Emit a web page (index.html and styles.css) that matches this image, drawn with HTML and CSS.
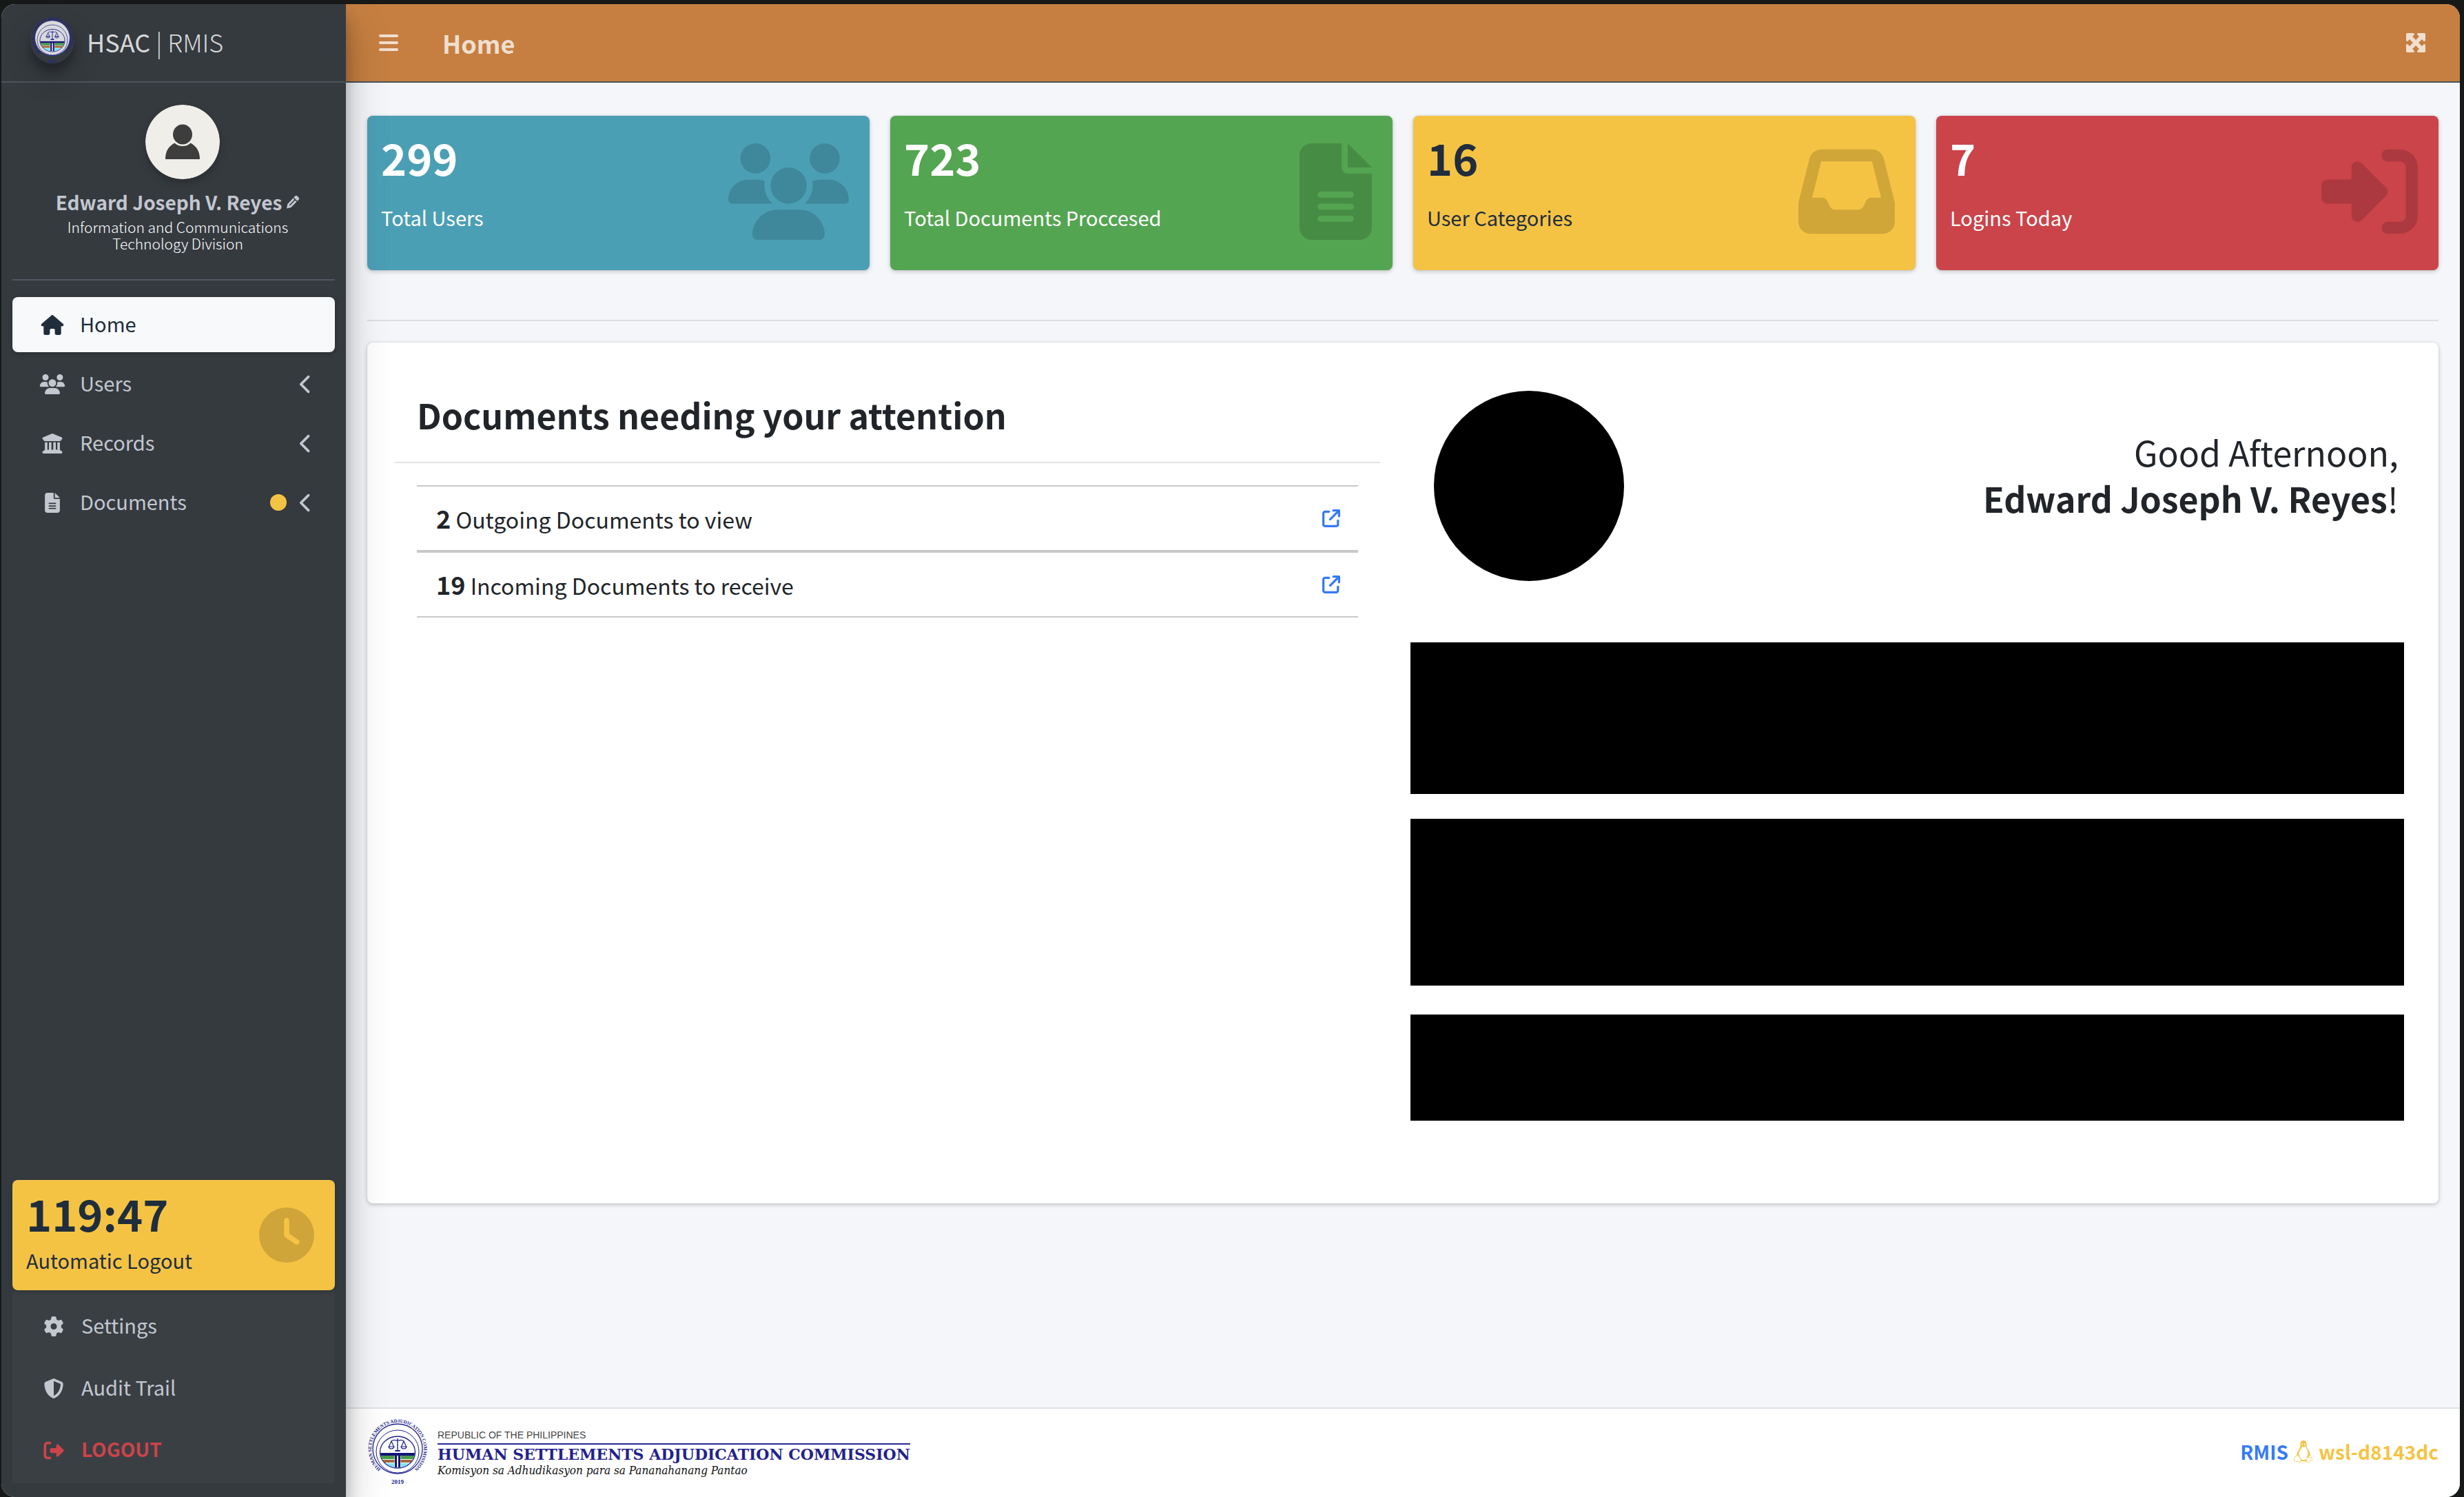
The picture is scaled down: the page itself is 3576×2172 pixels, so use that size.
FILE: index.html
```html
<!DOCTYPE html>
<html lang="en">
<head>
<meta charset="utf-8">
<title>HSAC | RMIS</title>
<link rel="stylesheet" href="styles.css">
</head>
<body>
<svg class="defs" aria-hidden="true">
  <defs>
    <symbol id="i-users" viewBox="0 0 640 512"><path d="M144 0a80 80 0 1 1 0 160A80 80 0 1 1 144 0zM512 0a80 80 0 1 1 0 160A80 80 0 1 1 512 0zM0 298.700C0 239.800 47.800 192 106.700 192h42.700c15.900 0 31 3.500 44.600 9.700c-1.300 7.200-1.900 14.700-1.900 22.300c0 38.200 16.800 72.500 43.300 96c-.2 0-.4 0-.7 0H21.300C9.600 320 0 310.400 0 298.700zM405.300 320c-.2 0-.4 0-.7 0c26.600-23.500 43.300-57.800 43.300-96c0-7.600-.7-15-1.900-22.300c13.600-6.300 28.700-9.700 44.600-9.700h42.700C592.200 192 640 239.800 640 298.700c0 11.800-9.600 21.300-21.300 21.300H405.300zM224 224a96 96 0 1 1 192 0 96 96 0 1 1-192 0zM128 485.300C128 411.700 187.700 352 261.300 352H378.700C452.300 352 512 411.700 512 485.300c0 14.700-11.900 26.700-26.700 26.700H154.700c-14.700 0-26.700-11.900-26.700-26.700z"/></symbol>
    <symbol id="i-file" viewBox="0 0 384 512"><path d="M64 0C28.700 0 0 28.700 0 64V448c0 35.300 28.700 64 64 64H320c35.300 0 64-28.700 64-64V160H256c-17.700 0-32-14.300-32-32V0H64zM256 0V128H384L256 0zM112 256H272c8.800 0 16 7.200 16 16s-7.200 16-16 16H112c-8.800 0-16-7.200-16-16s7.200-16 16-16zm0 64H272c8.800 0 16 7.200 16 16s-7.200 16-16 16H112c-8.800 0-16-7.200-16-16s7.200-16 16-16zm0 64H272c8.800 0 16 7.200 16 16s-7.200 16-16 16H112c-8.800 0-16-7.200-16-16s7.200-16 16-16z"/></symbol>
    <symbol id="i-inbox" viewBox="0 0 512 512"><path d="M121 32C91.600 32 66 52 58.900 80.500L1.900 308.400C.6 313.500 0 318.700 0 323.900V416c0 35.300 28.700 64 64 64H448c35.300 0 64-28.700 64-64V323.900c0-5.200-.6-10.400-1.900-15.500l-57-227.900C446 52 420.400 32 391 32H121zm0 64H391l48 192H387.800c-12.100 0-23.200 6.800-28.600 17.700l-14.300 28.600c-5.400 10.800-16.500 17.700-28.600 17.700H195.800c-12.100 0-23.200-6.800-28.600-17.700l-14.300-28.600c-5.400-10.800-16.500-17.700-28.600-17.700H73L121 96z"/></symbol>
    <symbol id="i-login" viewBox="0 0 512 512"><path d="M352 96l64 0c17.700 0 32 14.300 32 32l0 256c0 17.700-14.300 32-32 32l-64 0c-17.700 0-32 14.300-32 32s14.300 32 32 32l64 0c53 0 96-43 96-96l0-256c0-53-43-96-96-96l-64 0c-17.700 0-32 14.300-32 32s14.300 32 32 32zM342.600 233.400l-128-128C205.500 96.200 191.700 93.500 179.800 98.400S160 115.100 160 128v64H32c-17.700 0-32 14.300-32 32v64c0 17.700 14.300 32 32 32h128v64c0 12.900 7.800 24.600 19.800 29.600s25.700 2.200 34.900-6.900l128-128c12.500-12.500 12.500-32.800 0-45.300z"/></symbol>
    <symbol id="i-logout" viewBox="0 0 512 512"><path d="M160 96c17.700 0 32-14.300 32-32s-14.300-32-32-32H96C43 32 0 75 0 128V384c0 53 43 96 96 96h64c17.700 0 32-14.300 32-32s-14.300-32-32-32H96c-17.700 0-32-14.300-32-32V128c0-17.700 14.300-32 32-32h64zM502.600 233.400l-128-128C365.500 96.200 351.700 93.500 339.800 98.400S320 115.100 320 128v64H192c-17.700 0-32 14.300-32 32v64c0 17.700 14.300 32 32 32h128v64c0 12.900 7.800 24.600 19.800 29.600s25.700 2.200 34.900-6.900l128-128c12.500-12.500 12.500-32.800 0-45.300z"/></symbol>
    <symbol id="i-house" viewBox="0 0 576 512"><path d="M575.800 255.500c0 18-15 32.100-32 32.100h-32l.7 160.200c0 2.700-.2 5.400-.5 8.100V472c0 22.100-17.900 40-40 40H456c-1.100 0-2.200 0-3.300-.1c-1.400 .1-2.800 .1-4.200 .1H416 392c-22.100 0-40-17.900-40-40V448 384c0-17.700-14.300-32-32-32H256c-17.700 0-32 14.300-32 32v64 24c0 22.100-17.900 40-40 40H160 128.100c-1.500 0-3-.1-4.500-.2c-1.200 .1-2.400 .2-3.600 .2H104c-22.100 0-40-17.900-40-40V360c0-.9 0-1.900 .1-2.800V287.600H32c-18 0-32-14-32-32.100c0-9 3-17 10-24L266.400 8c7-7 15-8 22-8s15 2 21 7L564.800 231.500c8 7 12 15 11 24z"/></symbol>
    <symbol id="i-bank" viewBox="0 0 512 512"><path d="M243.400 2.600l-224 96c-14 6-21.800 21-18.700 35.800S16.800 160 32 160v8c0 13.300 10.700 24 24 24H456c13.300 0 24-10.700 24-24v-8c15.200 0 28.300-10.700 31.300-25.600s-4.800-29.900-18.700-35.800l-224-96c-8-3.400-17.200-3.400-25.200 0zM128 224H64V420.300c-.6 .3-1.200 .7-1.800 1.100l-48 32c-11.700 7.800-17 22.400-12.900 35.900S17.900 512 32 512H480c14.100 0 26.500-9.200 30.600-22.700s-1.100-28.100-12.900-35.900l-48-32c-.6-.4-1.200-.7-1.800-1.100V224H384V416H344V224H280V416H232V224H168V416H128V224z"/></symbol>
    <symbol id="i-left" viewBox="0 0 320 512"><path d="M9.400 233.400c-12.500 12.500-12.500 32.800 0 45.300l192 192c12.500 12.500 32.800 12.500 45.300 0s12.500-32.800 0-45.300L77.300 256 246.600 86.600c12.500-12.500 12.500-32.800 0-45.300s-32.800-12.500-45.300 0l-192 192z"/></symbol>
    <symbol id="i-gear" viewBox="0 0 512 512"><path d="M495.900 166.600c3.200 8.700 .5 18.400-6.400 24.600l-43.300 39.400c1.100 8.300 1.700 16.800 1.700 25.400s-.6 17.100-1.700 25.400l43.300 39.400c6.900 6.200 9.600 15.900 6.400 24.600c-4.400 11.900-9.700 23.300-15.800 34.300l-4.700 8.100c-6.600 11-14 21.400-22.100 31.200c-5.900 7.200-15.700 9.600-24.500 6.800l-55.700-17.700c-13.400 10.300-28.200 18.900-44 25.400l-12.500 57.100c-2 9.100-9 16.300-18.200 17.800c-13.800 2.300-28 3.500-42.500 3.500s-28.700-1.200-42.500-3.500c-9.200-1.500-16.200-8.700-18.200-17.800l-12.500-57.100c-15.800-6.500-30.600-15.100-44-25.400L83.100 425.900c-8.800 2.800-18.600 .3-24.500-6.800c-8.100-9.800-15.500-20.200-22.100-31.200l-4.700-8.100c-6.100-11-11.400-22.400-15.800-34.300c-3.200-8.700-.5-18.400 6.400-24.600l43.300-39.400C64.600 273.100 64 264.600 64 256s.6-17.100 1.700-25.400L22.400 191.200c-6.900-6.200-9.600-15.900-6.400-24.600c4.400-11.900 9.700-23.300 15.800-34.300l4.700-8.100c6.600-11 14-21.400 22.100-31.200c5.900-7.200 15.700-9.600 24.500-6.800l55.700 17.700c13.400-10.300 28.200-18.900 44-25.400l12.500-57.100c2-9.100 9-16.300 18.200-17.800C227.300 1.200 241.500 0 256 0s28.700 1.200 42.500 3.500c9.200 1.500 16.200 8.700 18.200 17.800l12.500 57.100c15.800 6.500 30.600 15.100 44 25.400l55.700-17.700c8.800-2.800 18.600-.3 24.500 6.800c8.100 9.800 15.500 20.200 22.100 31.200l4.700 8.100c6.100 11 11.400 22.400 15.800 34.300zM256 336a80 80 0 1 0 0-160 80 80 0 1 0 0 160z"/></symbol>
    <symbol id="i-shield" viewBox="0 0 512 512"><path d="M256 0c4.600 0 9.200 1 13.400 2.900L457.700 82.800c22 9.300 38.400 31 38.300 57.200c-.5 99.200-41.300 280.700-213.600 363.200c-16.700 8-36.100 8-52.800 0C57.300 420.700 16.500 239.200 16 140c-.1-26.200 16.300-47.900 38.300-57.200L242.700 2.900C246.800 1 251.400 0 256 0zm0 66.800V444.800C394 378 431.100 230.100 432 141.400L256 66.800z"/></symbol>
    <symbol id="i-clock" viewBox="0 0 512 512"><path fill-rule="evenodd" d="M256 0a256 256 0 1 1 0 512A256 256 0 1 1 256 0zM232 120V256c0 8 4 15.500 10.700 20l96 64c11 7.400 25.900 4.400 33.300-6.700s4.400-25.900-6.700-33.300L280 243.200V120c0-13.300-10.700-24-24-24s-24 10.700-24 24z"/></symbol>
    <symbol id="i-bars" viewBox="0 0 448 512"><path d="M0 96C0 78.300 14.300 64 32 64H416c17.700 0 32 14.300 32 32s-14.300 32-32 32H32C14.300 128 0 113.700 0 96zM0 256c0-17.700 14.300-32 32-32H416c17.700 0 32 14.300 32 32s-14.300 32-32 32H32c-17.700 0-32-14.300-32-32zM448 416c0 17.700-14.300 32-32 32H32c-17.700 0-32-14.300-32-32s14.300-32 32-32H416c17.700 0 32 14.300 32 32z"/></symbol>
    <symbol id="i-expand" viewBox="0 0 512 512"><path d="M200 32H56C42.700 32 32 42.700 32 56V200c0 9.700 5.800 18.500 14.800 22.200s19.300 1.700 26.200-5.200l40-40 79 79-79 79L73 295c-6.900-6.900-17.200-8.900-26.200-5.200S32 302.300 32 312V456c0 13.300 10.700 24 24 24H200c9.700 0 18.500-5.800 22.200-14.800s1.700-19.300-5.200-26.200l-40-40 79-79 79 79-40 40c-6.900 6.900-8.900 17.200-5.200 26.200s12.500 14.800 22.200 14.800H456c13.300 0 24-10.700 24-24V312c0-9.700-5.800-18.500-14.800-22.200s-19.300-1.700-26.200 5.200l-40 40-79-79 79-79 40 40c6.900 6.900 17.200 8.900 26.200 5.200s14.800-12.500 14.800-22.200V56c0-13.300-10.700-24-24-24H312c-9.700 0-18.500 5.800-22.200 14.800s-1.700 19.300 5.200 26.200l40 40-79 79-79-79 40-40c6.900-6.900 8.900-17.200 5.200-26.200S209.700 32 200 32z"/></symbol>
    <symbol id="i-external" viewBox="0 0 512 512"><path d="M320 0c-17.700 0-32 14.300-32 32s14.300 32 32 32h82.700L201.400 265.400c-12.500 12.500-12.500 32.800 0 45.300s32.800 12.500 45.300 0L448 109.300V192c0 17.700 14.300 32 32 32s32-14.300 32-32V32c0-17.700-14.300-32-32-32H320zM80 32C35.800 32 0 67.800 0 112V432c0 44.200 35.800 80 80 80H400c44.200 0 80-35.800 80-80V320c0-17.700-14.300-32-32-32s-32 14.300-32 32V432c0 8.800-7.200 16-16 16H80c-8.800 0-16-7.200-16-16V112c0-8.800 7.200-16 16-16H192c17.700 0 32-14.300 32-32s-14.300-32-32-32H80z"/></symbol>
    <symbol id="i-pencil" viewBox="0 0 20 20"><path d="M13 1.800a2.600 2.600 0 0 1 3.700 0l1.500 1.500a2.600 2.600 0 0 1 0 3.700L7.300 17.900 1 19.400l1.300-6.500z"/><path d="M11 4.200l4.900 4.900M13.400 6.600L5.200 15" fill="none" stroke="#353a3f" stroke-width="1.500"/></symbol>
    <symbol id="i-tux" viewBox="0 0 28 34"><path d="M14 1c-3.600 0-4.800 2.800-4.500 6 .3 3.400-1 5.400-3 8.700C5 18.500 4 21 4.200 23.500l3.300 3.200 2.700 4.600h8l1.800-5 3.600-3.200c.3-2.800-.6-5.500-2.300-8C19 12 18.600 10 18.600 7 18.600 3.200 17.300 1 14 1zM12 9.500l2 1 3-1.200c.6 2.800 3 6 3.400 9 .4 3.500-1 6.200-1.800 9.200-2.500 2.600-6 2.500-8 .5-.8-2.600-3.500-4.500-3.300-8.300.2-3.600 4.200-6.400 4.700-10.200zM11.800 5.200c.8 0 1.200.8 1.200 1.700l-1.700.4c-.4-.8-.2-2 .5-2.100zm4 0c.9 0 1.400 1.200 1 2.200L15 6.900c0-1 .2-1.600.8-1.700z" fill-rule="evenodd"/><path d="M5.500 22.500C4 23 3 24.300 1.200 24.800c.3 2.200-1 4-.4 5.600 2.500.8 6 1.500 8.200 2.300 2-.4 2.200-2.600 1.300-4.200C9 26.500 7.300 22.600 5.500 22.500zM19.200 24c-.8 2.600-1.700 6.500-.6 8.300 2.500 1.500 5-1.700 8.500-3.400-1-1.800-1.300-1.600-1.600-4-1.800 1.700-5 1.700-6.300-.9z" fill="#fff" stroke="#f5c344" stroke-width=".8"/></symbol>
    <clipPath id="bowl"><path d="M19 50h50a25 21 0 0 1-50 0z"/></clipPath>
    <symbol id="seal" viewBox="0 0 88 96">
      <circle cx="44" cy="44" r="36" fill="var(--seal-bg)" stroke="#22228c" stroke-width="1.300"/>
      <circle cx="44" cy="48" r="31" fill="none" stroke="#22228c" stroke-width="1"/>
      <ellipse cx="44" cy="49" rx="25.500" ry="23" fill="none" stroke="#22228c" stroke-width="1.300"/>
      <g clip-path="url(#bowl)">
        <path d="M18 54h52v5H18z" fill="#4a9a4a"/>
        <path d="M18 60h52v4H18z" fill="#a0683c"/>
        <path d="M18 65h52v8H18z" fill="#7fe3f2"/>
        <path d="M39.500 54h9v20h-9z" fill="#fff"/>
        <path d="M18 50h52v4H48v18h-3V54h-2v18h-3V54H18z" fill="#14147a"/>
      </g>
      <path d="M43.300 29h1.400v17h3v2h-7.400v-2h3z" fill="#22228c"/>
      <path d="M35 33c3-3 5-1 9-1s6-2 9 1M35 33l-3.500 8h7zM53 33l-3.500 8h7zM31 41c1 4 7 4 8 0zM49 41c1 4 7 4 8 0z" fill="none" stroke="#22228c" stroke-width="1.200"/>
      <path id="ring" d="M20 73.500A38 38 0 1 1 68 73.500" fill="none"/>
      <text class="seal-text"><textPath href="#ring" startOffset="50%" text-anchor="middle">HUMAN SETTLEMENTS ADJUDICATION COMMISSION</textPath></text>
      <text class="seal-year" x="44" y="95" text-anchor="middle">2019</text>
    </symbol>
  </defs>
</svg>

<div class="app">
  <aside class="sidebar">
    <a class="brand" href="#">
      <svg class="brand-logo" viewBox="0 0 88 96"><use href="#seal"/></svg>
      <span class="brand-text">HSAC <span class="light">| RMIS</span></span>
    </a>
    <div class="sidebar-body">
      <div class="profile">
        <svg class="avatar" viewBox="0 0 108 108" role="img" aria-label="Profile picture"><circle cx="54" cy="54" r="54" fill="#f0eee9"/><ellipse cx="54" cy="43" rx="14" ry="14.500" fill="#3d3d3d"/><path d="M29 79c0-12 5-19 13.500-23.500 3 3 7 4.500 11.500 4.500s8.500-1.500 11.500-4.500C74 60 79 67 79 79z" fill="#3d3d3d"/></svg>
        <a class="profile-name" href="#">Edward Joseph V. Reyes <svg class="pencil"><use href="#i-pencil"/></svg></a>
        <p class="profile-unit">Information and Communications<br>Technology Division</p>
      </div>
      <nav class="menu">
        <a class="item active" href="#"><svg class="icon"><use href="#i-house"/></svg><span>Home</span></a>
        <a class="item" href="#"><svg class="icon"><use href="#i-users"/></svg><span>Users</span><svg class="arrow"><use href="#i-left"/></svg></a>
        <a class="item" href="#"><svg class="icon"><use href="#i-bank"/></svg><span>Records</span><svg class="arrow"><use href="#i-left"/></svg></a>
        <a class="item" href="#"><svg class="icon"><use href="#i-file"/></svg><span>Documents</span><i class="dot"></i><svg class="arrow"><use href="#i-left"/></svg></a>
      </nav>
      <div class="bottom">
        <div class="timer">
          <div><strong class="figure">119:47</strong><span class="timer-label">Automatic Logout</span></div>
          <svg class="timer-icon"><use href="#i-clock"/></svg>
        </div>
        <nav class="submenu">
          <a class="item" href="#"><svg class="icon"><use href="#i-gear"/></svg><span>Settings</span></a>
          <a class="item" href="#"><svg class="icon"><use href="#i-shield"/></svg><span>Audit Trail</span></a>
          <a class="item logout" href="#"><svg class="icon"><use href="#i-logout"/></svg><span>LOGOUT</span></a>
        </nav>
      </div>
    </div>
  </aside>

  <div class="page">
    <header class="topbar">
      <button class="tool" aria-label="Toggle menu"><svg class="bars"><use href="#i-bars"/></svg></button>
      <h1>Home</h1>
      <button class="tool end" aria-label="Full screen"><svg class="expand"><use href="#i-expand"/></svg></button>
    </header>

    <main class="content">
      <section class="stats">
        <div class="stat info"><div><strong class="figure">299</strong><span>Total Users</span></div><svg class="wide"><use href="#i-users"/></svg></div>
        <div class="stat success"><div><strong class="figure">723</strong><span>Total Documents Proccesed</span></div><svg class="narrow"><use href="#i-file"/></svg></div>
        <div class="stat warning"><div><strong class="figure">16</strong><span>User Categories</span></div><svg><use href="#i-inbox"/></svg></div>
        <div class="stat danger"><div><strong class="figure">7</strong><span>Logins Today</span></div><svg><use href="#i-login"/></svg></div>
      </section>
      <hr class="rule">
      <section class="card">
        <div class="attention">
          <h2>Documents needing your attention</h2>
          <ul>
            <li><span><b>2</b> Outgoing Documents to view</span><a href="#" aria-label="Open outgoing documents"><svg><use href="#i-external"/></svg></a></li>
            <li><span><b>19</b> Incoming Documents to receive</span><a href="#" aria-label="Open incoming documents"><svg><use href="#i-external"/></svg></a></li>
          </ul>
        </div>
        <div class="welcome">
          <div class="greeting">
            <div class="portrait"></div>
            <p>Good Afternoon,<br><b>Edward Joseph V. Reyes</b>!</p>
          </div>
          <div class="block first"></div>
          <div class="block second"></div>
          <div class="block third"></div>
        </div>
      </section>
    </main>

    <footer class="footer">
      <div class="agency">
        <svg class="agency-seal" viewBox="0 0 88 96"><use href="#seal"/></svg>
        <div class="agency-text">
          <span class="republic">REPUBLIC OF THE PHILIPPINES</span>
          <span class="commission">HUMAN SETTLEMENTS ADJUDICATION COMMISSION</span>
          <span class="komisyon">Komisyon sa Adhudikasyon para sa Pananahanang Pantao</span>
        </div>
      </div>
      <div class="version"><a href="#">RMIS</a><svg class="tux"><use href="#i-tux"/></svg><span>wsl-d8143dc</span></div>
    </footer>
  </div>
</div>
</body>
</html>
```
FILE: styles.css
```css
* { box-sizing: border-box; }

body {
  margin: 0;
  min-height: 100vh;
  display: flex;
  padding: 6px 6px 0 2px;
  background: #171918;
  color: #212529;
  font-family: "Noto Sans CJK SC", "Noto Sans", sans-serif;
  font-size: 29px;
  line-height: 48px;
}

a { color: inherit; text-decoration: none; }
h1, h2, p, ul { margin: 0; padding: 0; }
svg { display: block; fill: currentColor; }
.defs { position: absolute; width: 0; height: 0; }

.app {
  flex: 1;
  display: grid;
  grid-template-columns: 500px 1fr;
  border-radius: 20px;
  overflow: hidden;
  background: #f4f6f9;
}

/* Sidebar */
.sidebar {
  position: relative;
  z-index: 1;
  display: flex;
  flex-direction: column;
  background: #353a3f;
  color: #c2c7d0;
  box-shadow: 0 28px 56px rgba(0, 0, 0, .25), 0 20px 20px rgba(0, 0, 0, .22);
}

.brand {
  display: flex;
  align-items: center;
  height: 114px;
  padding: 0 0 8px 42px;
  gap: 18px;
  border-bottom: 2px solid #4b545c;
  color: #d7d8d9;
  font-size: 36px;
}
.brand-logo {
  --seal-bg: #d9dadb;
  width: 64px;
  height: 68px;
  border-radius: 50%;
  box-shadow: 0 20px 40px rgba(0, 0, 0, .19), 0 12px 12px rgba(0, 0, 0, .23);
}
.brand-text { padding-top: 4px; }
.light { font-weight: 300; }

.sidebar-body {
  flex: 1;
  display: flex;
  flex-direction: column;
  padding: 32px 16px 20px;
}

.profile {
  display: flex;
  flex-direction: column;
  align-items: center;
  height: 255px;
  padding-left: 12px;
  border-bottom: 2px solid #4f5962;
}
.avatar {
  width: 108px;
  height: 108px;
  margin-left: 14px;
  border-radius: 50%;
  box-shadow: 0 6px 12px rgba(0, 0, 0, .2);
}
.profile-name {
  display: flex;
  align-items: center;
  gap: 6px;
  margin-top: 9px;
  font-size: 28px;
  font-weight: 700;
}
.pencil { width: 20px; height: 20px; }
.profile-unit {
  color: #fff;
  font-size: 21px;
  font-weight: 300;
  line-height: 24px;
  text-align: center;
}

.menu {
  display: flex;
  flex-direction: column;
  gap: 6px;
  margin-top: 24px;
}
.item {
  display: flex;
  align-items: center;
  height: 80px;
  padding: 0 32px 0 34px;
  border-radius: 8px;
}
.item > span { flex: 1; padding-bottom: 4px; }
.icon { width: 48px; height: 29px; margin-right: 16px; }
.arrow { width: 20px; height: 29px; }
.dot {
  width: 24px;
  height: 24px;
  margin-right: 18px;
  border-radius: 50%;
  background: #f5c344;
}
.active {
  background: #f8f9fa;
  color: #1f2d3d;
  box-shadow: 0 2px 6px rgba(0, 0, 0, .24);
}

.bottom { margin-top: auto; background: #3a3f44; }
.timer {
  display: flex;
  justify-content: space-between;
  height: 160px;
  padding: 16px 30px 16px 20px;
  border-radius: 8px;
  background: #f5c344;
  color: #1f2d3d;
  box-shadow: 0 2px 6px rgba(0, 0, 0, .2);
}
.figure {
  display: block;
  font-size: 63px;
  line-height: 64px;
}
.timer-label { display: block; margin-top: 12px; }
.timer-icon { width: 80px; height: 80px; margin-top: 24px; opacity: .15; color: #000; }
.submenu {
  display: flex;
  flex-direction: column;
  gap: 10px;
  height: 280px;
  padding: 12px 0 0 2px;
}
.logout { color: #cb444a; font-size: 28px; font-weight: 700; }

/* Top bar */
.page { display: flex; flex-direction: column; min-width: 0; }
.topbar {
  display: flex;
  align-items: center;
  height: 114px;
  padding: 0 48px;
  border-bottom: 2px solid #4b545c;
  background: #c67f41;
  color: #f0dfcf;
}
.tool {
  padding: 0;
  border: 0;
  background: none;
  color: inherit;
}
.bars { width: 28px; height: 32px; }
.expand { width: 32px; height: 32px; }
.end { margin-left: auto; }
.topbar h1 { margin-left: 64px; font-size: 36px; }

/* Content */
.content { flex: 1; padding: 48px 31px 64px; }
.stats { display: grid; grid-template-columns: repeat(4, 1fr); gap: 30px; }
.stat {
  display: flex;
  justify-content: space-between;
  height: 224px;
  padding: 28px 30px 20px 20px;
  border-radius: 8px;
  color: #fff;
  box-shadow: 0 0 2px rgba(0, 0, 0, .13), 0 2px 6px rgba(0, 0, 0, .2);
}
.stat .figure { margin-bottom: 31px; }
.stat svg { width: 140px; height: 140px; margin-top: 12px; color: rgba(0, 0, 0, .15); }
.stat .wide { width: 175px; }
.stat .narrow { width: 105px; }
.info { background: #4b9fb5; }
.success { background: #54a551; }
.warning { background: #f5c344; color: #1f2d3d; }
.danger { background: #cb444a; }

.rule { margin: 72px 0 31px; border: 0; border-top: 2px solid #dcdfe2; }

.card {
  display: grid;
  grid-template-columns: 1430fr 1442fr;
  column-gap: 44px;
  min-height: 1249px;
  padding: 70px 50px 70px 40px;
  border-radius: 8px;
  background: #fff;
  box-shadow: 0 0 2px rgba(0, 0, 0, .13), 0 2px 6px rgba(0, 0, 0, .2);
}
.attention h2 {
  padding: 0 32px 35px;
  border-bottom: 2px solid #e5e5e5;
  font-size: 50px;
  line-height: 68px;
}
.attention ul { margin: 32px 32px 0; list-style: none; }
.attention li {
  display: flex;
  justify-content: space-between;
  align-items: center;
  height: 96px;
  padding: 0 26px 0 28px;
  border: solid #c8c8c8;
  border-width: 2px 0;
  font-size: 32px;
}
.attention b { font-size: 36px; }
.attention a { color: #357af6; }
.attention a svg { width: 26px; height: 26px; }

.greeting {
  display: flex;
  justify-content: space-between;
  padding: 0 8px 0 34px;
  font-size: 50px;
  line-height: 67px;
  text-align: right;
}
.portrait { width: 276px; height: 276px; border-radius: 50%; background: #000; }
.greeting p { margin-top: 55px; }
.block { background: #000; }
.first { height: 220px; margin-top: 89px; }
.second { height: 242px; margin-top: 36px; }
.third { height: 154px; margin-top: 42px; }

/* Footer */
.footer {
  display: flex;
  justify-content: space-between;
  align-items: center;
  height: 130px;
  padding: 0 31px 4px;
  border-top: 2px solid #dee2e6;
  background: #fff;
}
.agency { display: flex; align-items: center; gap: 14px; }
.agency-seal { --seal-bg: #fff; width: 88px; height: 96px; }
.agency-text { display: flex; flex-direction: column; }
.republic {
  border-bottom: 2px solid #2b2b96;
  color: #444;
  font: 14px/24px "Liberation Sans Narrow", "Liberation Sans", sans-serif;
}
.commission { color: #22228c; font: bold 22px/28px "DejaVu Serif", serif; }
.komisyon { color: #111; font: italic 17px/18px "DejaVu Serif Condensed", "DejaVu Serif", serif; }
.version {
  display: flex;
  align-items: center;
  gap: 8px;
  color: #f5c344;
  font-size: 28px;
  font-weight: 700;
}
.version a { color: #357af6; }
.tux { width: 28px; height: 34px; }
.seal-text { fill: #22228c; font: bold 7px "Liberation Serif", serif; }
.seal-year { fill: #22228c; font: bold 9px "Liberation Serif", serif; }
```
